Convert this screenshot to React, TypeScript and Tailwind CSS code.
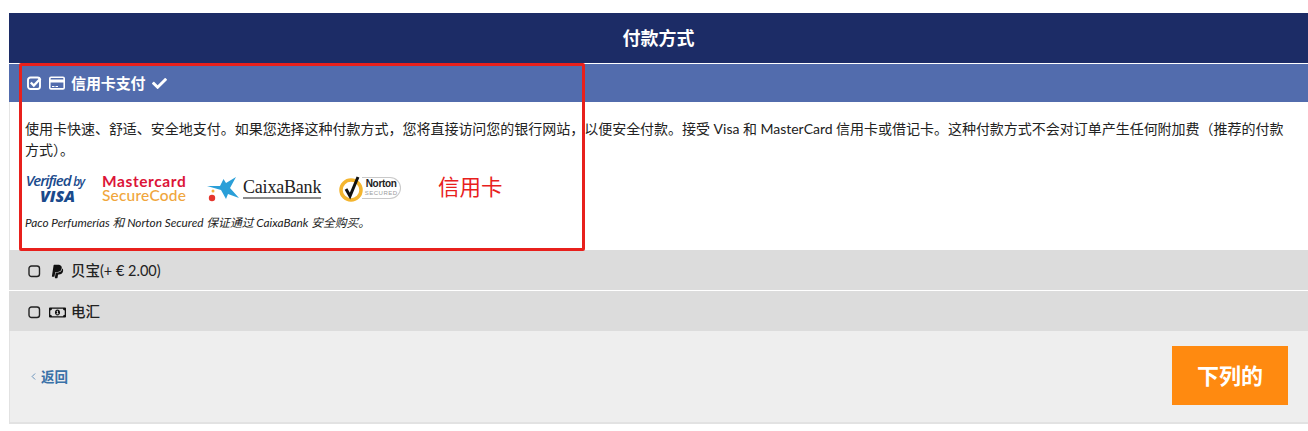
import { FaCheck, FaPaypal, FaRegMoneyBillAlt } from 'react-icons/fa';
import { ChevronLeft } from 'lucide-react';

function CheckedBox() {
  return (
    <svg width="15" height="14" viewBox="0 0 15 14" className="shrink-0">
      <rect x="1" y="1.5" width="12" height="11.5" rx="2.5" fill="none" stroke="#ffffff" strokeWidth="1.9" />
      <path d="M3.8 6.5 L6.8 9.5 L13.5 2.5" fill="none" stroke="#ffffff" strokeWidth="2.4" />
    </svg>
  );
}

function EmptyBox() {
  return (
    <svg width="13" height="13" viewBox="0 0 13 13" className="shrink-0">
      <rect x="1" y="1" width="10.5" height="10.5" rx="2.5" fill="none" stroke="#222222" strokeWidth="1.4" />
    </svg>
  );
}

function CardIcon() {
  return (
    <svg width="16" height="14" viewBox="0 0 16 14" className="shrink-0">
      <rect x="0.8" y="1.3" width="14.4" height="11.6" rx="1.2" fill="none" stroke="#ffffff" strokeWidth="1.6" />
      <rect x="1" y="3.5" width="14" height="3" fill="#ffffff" />
      <rect x="3" y="10" width="2.5" height="1" fill="#ffffff" />
      <rect x="6.5" y="10" width="2.5" height="1" fill="#ffffff" />
    </svg>
  );
}

function VisaLogo() {
  return (
    <div className="flex w-[60px] flex-col items-center font-['Open_Sans','Noto_Sans',sans-serif] italic text-[#1a4a8c]">
      <div className="whitespace-nowrap text-[15px] font-semibold leading-[15px] tracking-[-1px]">
        Verified <span className="text-[12px] font-semibold">by</span>
      </div>
      <div className="pl-[5px] text-[16px] font-extrabold leading-[15px]">VISA</div>
    </div>
  );
}

function MastercardLogo() {
  return (
    <div className="ml-[17px] flex w-[86px] flex-col font-['Lato',sans-serif] text-[15.5px] leading-[14px]">
      <div className="font-bold tracking-[0.6px] text-[#dc1438]">Mastercard</div>
      <div className="font-medium tracking-[0.2px] text-[#f0a63c]">SecureCode</div>
    </div>
  );
}

function CaixaLogo() {
  return (
    <div className="ml-[18px] flex items-center">
      <svg width="33" height="27" viewBox="0 0 33 27">
        <path d="M1 11 L14 11 L17.5 4 L20 8 L30 2 L24 13 L33 23 L22 19 L20 24 L15 15 Z" fill="#2a9fd8" />
        <circle cx="6" cy="23" r="3.2" fill="#e5352d" />
        <circle cx="7" cy="16" r="1.5" fill="#f4b33d" />
      </svg>
      <div className="ml-[4px] border-b-2 border-[#8b8b8b] font-['Liberation_Serif',serif] text-[18px] font-medium leading-[20px] tracking-[-0.2px] text-[#222222]">
        CaixaBank
      </div>
    </div>
  );
}

function NortonLogo() {
  return (
    <div className="ml-[17px] flex h-[27px] w-[63px] items-center">
      <svg width="26" height="27" viewBox="0 0 26 27" className="shrink-0">
        <circle cx="13" cy="15" r="10" fill="#ffffff" stroke="#f4b52f" strokeWidth="3.5" />
        <path d="M8 14 L12 21 L20 2" fill="none" stroke="#111111" strokeWidth="3" />
      </svg>
      <div className="ml-[-2px] flex h-[22px] w-[39px] flex-col items-center rounded-r-full border border-l-0 border-[#c9c9c9]">
        <span className="font-['Liberation_Sans',sans-serif] text-[10px] font-bold leading-[12px] tracking-[-0.3px] text-[#222222]">Norton</span>
        <span className="font-['Liberation_Sans',sans-serif] text-[6px] leading-[7px] tracking-[0.5px] text-[#9a9a9a]">SECURED</span>
      </div>
    </div>
  );
}

export default function App() {
  return (
    <main className="relative h-[431px] w-[1308px] overflow-hidden bg-white pl-[9px] pt-[13px] font-['Lato','Noto_Sans_CJK_SC',sans-serif] text-[14px] text-[#222222]">
      {/* Header */}
      <div className="flex h-[50px] items-center justify-center bg-[#1c2c66] text-[18px] font-bold text-white">
        付款方式
      </div>

      {/* Credit card */}
      <div className="mt-px flex h-[38px] items-center gap-[6px] bg-[#526cad] pl-[18px] text-[15px] font-bold tracking-[-0.1px] text-white">
        <CheckedBox />
        <div className="ml-[1px]">
          <CardIcon />
        </div>
        <span>信用卡支付</span>
        <FaCheck className="text-[15px]" />
      </div>
      <div className="h-[148px] border-l border-[#e5e5e5] pl-[15px] pr-[20px] pt-[17px]">
        <p className="text-[14px] leading-[20.5px] tracking-[-0.02px]">
          使用卡快速、舒适、安全地支付。如果您选择这种付款方式，您将直接访问您的银行网站，以便安全付款。接受 Visa 和 MasterCard 信用卡或借记卡。这种付款方式不会对订单产生任何附加费（推荐的付款方式）。
        </p>
        <div className="mt-[13px] flex h-[30px] items-center">
          <VisaLogo />
          <MastercardLogo />
          <CaixaLogo />
          <NortonLogo />
        </div>
        <p className="mt-[12px] text-[11.8px] italic leading-[16px]">
          Paco Perfumerías 和 Norton Secured 保证通过 CaixaBank 安全购买。
        </p>
      </div>

      {/* Other methods */}
      <div className="flex h-[40px] items-center bg-[#dcdcdc] pl-[19px] pt-[2px] text-[14.5px]">
        <EmptyBox />
        <FaPaypal className="ml-[9px] text-[15px] text-[#111111]" />
        <span className="ml-[6px]"><span className="font-medium">贝宝</span>(+ € 2.00)</span>
      </div>
      <div className="mt-px flex h-[40px] items-center bg-[#dcdcdc] pl-[19px] pt-[2px] text-[14.5px]">
        <EmptyBox />
        <FaRegMoneyBillAlt className="ml-[8px] text-[17px] text-[#111111]" />
        <span className="ml-[5px] font-medium">电汇</span>
      </div>

      {/* Footer */}
      <div className="flex h-[93px] items-center justify-between border-b-2 border-l border-[#e2e2e2] bg-[#eeeeee] pl-[18px] pr-[20px]">
        <a className="mt-[2px] flex items-center gap-[2px] text-[13.5px] font-bold text-[#3a72a8]">
          <ChevronLeft size={11} strokeWidth={1.6} className="mb-[3px]" />
          返回
        </a>
        <button className="mb-[2px] h-[59px] w-[116px] bg-[#ff8a10] text-[22px] font-bold text-white">下列的</button>
      </div>

      {/* Annotation drawn over the page */}
      <div className="absolute left-[19px] top-[63px] h-[188px] w-[566px] rounded-[2px] border-[3px] border-[#e8201c]" />
      <div className="absolute left-[438px] top-[172px] text-[21.5px] leading-[30px] text-[#e8201c]">信用卡</div>
    </main>
  );
}
